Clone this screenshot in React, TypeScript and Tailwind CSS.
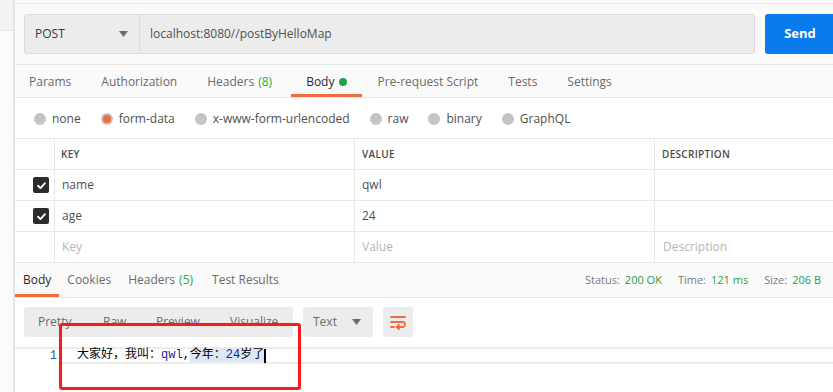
import React from 'react'

const ui = { fontFamily: '"Open Sans", "Noto Sans", sans-serif' }
const mono = { fontFamily: '"Liberation Mono", "Noto Sans CJK SC", monospace' }

const requestTabs = ['Params', 'Authorization', 'Headers', 'Body', 'Pre-request Script', 'Tests', 'Settings']
const bodyTypes = ['none', 'form-data', 'x-www-form-urlencoded', 'raw', 'binary', 'GraphQL']

const rows = [
  { key: 'name', value: 'qwl' },
  { key: 'age', value: '24' },
]

const Check = () => (
  <span className="flex h-[16px] w-[16px] items-center justify-center rounded-[2px] bg-[#2b2b2b]">
    <svg width="11" height="11" viewBox="0 0 12 12" fill="none">
      <path d="M2.2 6.3 L4.9 8.8 L9.8 3.4" stroke="white" strokeWidth="2" strokeLinecap="round" strokeLinejoin="round" />
    </svg>
  </span>
)

const Caret = () => (
  <svg width="9" height="6" viewBox="0 0 9 6">
    <path d="M0 0 H9 L4.5 6 Z" fill="#6b6b6b" />
  </svg>
)

export default function App() {
  return (
    <div className="relative flex h-[392px] w-[833px] overflow-hidden bg-[#fffffd] text-[12px] text-[#505050]" style={ui}>
      {/* sidebar edge */}
      <div className="flex w-[15px] shrink-0 flex-col border-r-2 border-[#e4e4e4]">
        <div className="h-[31px] border-b border-[#e6e6e6] bg-[#f3f3f3]" />
        <div className="flex-1 bg-[#fbfbfb]" />
      </div>

      <div className="flex min-w-0 flex-1 flex-col">
        {/* request bar */}
        <div className="border-b border-[#e6e6e6] bg-[#fafafa] pt-[3px]">
          <div className="-mr-[2px] flex h-[61px] items-center border-t border-[#e8e8e8] pb-[1px] pl-[9px]">
            <div className="flex h-[40px] min-w-0 flex-1 rounded-[3px] border border-[#dadada] bg-[#ececec]">
              <div className="flex w-[115px] shrink-0 items-center justify-between border-r border-[#dadada] pl-[10px] pr-[11px] text-[12px] text-[#3a3a3a]">
                <span>POST</span>
                <Caret />
              </div>
              <div className="flex items-center pl-[10px] text-[12px] text-[#505050]">localhost:8080//postByHelloMap</div>
            </div>
            <button className="ml-[10px] flex h-[40px] w-[70px] shrink-0 items-center justify-center rounded-[3px] bg-[#097bed] text-[13px] font-bold text-white">
              Send
            </button>
          </div>
        </div>

        {/* request tabs */}
        <div className="flex h-[33px] items-stretch border-b border-[#e6e6e6] bg-[#fafafa] text-[12px]">
          {requestTabs.map((t) => (
            <div
              key={t}
              className={`flex items-center px-[15px] pt-[1px] ${t === 'Body' ? 'ml-[4px] border-b-[3px] border-[#f26b3a] pt-[4px] text-[#2a2a2a]' : 'text-[#6b6b6b]'} ${t === 'Params' ? 'pl-[14px]' : ''}`}
            >
              {t}
              {t === 'Headers' && <span className="ml-[4px] text-[#26b047]">(8)</span>}
              {t === 'Body' && <span className="ml-[5px] h-[8px] w-[8px] rounded-full bg-[#26a146]" />}
            </div>
          ))}
        </div>

        {/* body types */}
        <div className="flex h-[40px] items-center bg-white pl-[19px] pt-[1px] text-[12px]">
          {bodyTypes.map((b) => (
            <div key={b} className="mr-[20px] flex items-center gap-[6px] text-[#505050]">
              <span className="flex h-[12px] w-[12px] items-center justify-center rounded-full bg-[#c4c4c4]">
                {b === 'form-data' && <span className="h-[8px] w-[8px] rounded-full bg-[#f26b3a]" />}
              </span>
              <span>{b}</span>
            </div>
          ))}
        </div>

        {/* params table */}
        <div className="bg-white">
          <div className="grid h-[32px] grid-cols-[40px_300px_300px_1fr] border-y border-[#e8e8e8] text-[10px] font-semibold tracking-[0.3px] text-[#4a4a4a]">
            <div className="border-r border-[#e8e8e8]" />
            <div className="flex items-center border-r border-[#e8e8e8] pl-[6px]">KEY</div>
            <div className="flex items-center border-r border-[#e8e8e8] pl-[7px]">VALUE</div>
            <div className="flex items-center pl-[7px]">DESCRIPTION</div>
          </div>
          {rows.map((r) => (
            <div key={r.key} className="grid h-[31px] grid-cols-[40px_300px_300px_1fr] border-b border-[#e8e8e8] text-[12px]">
              <div className="flex items-center justify-end border-r border-[#e8e8e8] pr-[5px]">
                <Check />
              </div>
              <div className="flex items-center border-r border-[#e8e8e8] pl-[7px]">{r.key}</div>
              <div className="flex items-center border-r border-[#e8e8e8] pl-[7px]">{r.value}</div>
              <div />
            </div>
          ))}
          <div className="grid h-[31px] grid-cols-[40px_300px_300px_1fr] border-b border-[#e8e8e8] text-[12px] text-[#b5b5b5]">
            <div className="border-r border-[#e8e8e8]" />
            <div className="flex items-center border-r border-[#e8e8e8] pl-[7px]">Key</div>
            <div className="flex items-center border-r border-[#e8e8e8] pl-[7px]">Value</div>
            <div className="flex items-center pl-[8px]">Description</div>
          </div>
        </div>

        {/* response tabs */}
        <div className="flex h-[35px] items-stretch justify-between border-b border-[#e6e6e6] bg-[#fafafa] text-[12px]">
          <div className="flex">
            <div className="flex items-center border-b-[3px] border-[#f26b3a] px-[8px] pt-[3px] text-[#2a2a2a]">Body</div>
            <div className="flex items-center px-[8px] text-[#6b6b6b]">Cookies</div>
            <div className="flex items-center px-[9px] text-[#6b6b6b]">
              Headers<span className="ml-[4px] text-[#26b047]">(5)</span>
            </div>
            <div className="flex items-center px-[10px] text-[#6b6b6b]">Test Results</div>
          </div>
          <div className="flex items-center gap-[16px] pr-[12px] text-[11px]">
            <span className="flex gap-[5px] text-[#7a7a7a]">
              Status:<span className="text-[#26a146]">200 OK</span>
            </span>
            <span className="flex gap-[5px] text-[#7a7a7a]">
              Time:<span className="text-[#26a146]">121 ms</span>
            </span>
            <span className="flex gap-[5px] text-[#7a7a7a]">
              Size:<span className="text-[#26a146]">206 B</span>
            </span>
          </div>
        </div>

        {/* response toolbar */}
        <div className="flex items-center gap-[10px] bg-white pl-[9px] pt-[9px] pb-[10px] text-[12px] text-[#6b6b6b]">
          <div className="flex h-[30px] w-[269px] items-center rounded-[3px] bg-[#ececec] pl-[14px]">
            <span className="w-[65px]">Pretty</span>
            <span className="w-[53px]">Raw</span>
            <span className="w-[74px]">Preview</span>
            <span>Visualize</span>
          </div>
          <div className="flex h-[30px] w-[70px] items-center justify-between rounded-[3px] bg-[#ececec] pl-[10px] pr-[12px]">
            <span>Text</span>
            <Caret />
          </div>
          <div className="flex h-[30px] w-[30px] items-center justify-center rounded-[3px] bg-[#ececec]">
            <svg width="18" height="16" viewBox="0 0 18 16" fill="none" stroke="#f26b3a" strokeWidth="1.8" strokeLinecap="round" strokeLinejoin="round">
              <path d="M2 3 H16" />
              <path d="M2 8 H13.5 a2.5 2.5 0 0 1 0 5 H8" />
              <path d="M10 10.8 L7.6 13 L10 15.2" />
              <path d="M2 13 H5" />
            </svg>
          </div>
        </div>

        {/* editor */}
        <div className="flex flex-1 border-t-2 border-[#ececec] bg-[#fffffd]">
          <div className="w-[45px] shrink-0 pr-[3px] text-right text-[12px] leading-[14px] text-[#2a5db0]" style={mono}>
            1
          </div>
          <div className="flex-1">
            <div className="flex h-[15px] items-center border-b-2 border-[#ececec] pl-[17px] text-[12px] leading-[13px] text-black" style={mono}>
              <span>大家好，我叫：</span>
              <span className="text-[#1a1aa6]">qwl</span>
              <span>,</span>
              <span className="bg-[#dce8f5]">
                今年：<span className="text-[#1a1aa6]">24</span>岁了
              </span>
              <span className="h-[14px] w-[2px] bg-black" />
            </div>
          </div>
        </div>
      </div>

      {/* annotation box */}
      <div className="pointer-events-none absolute left-[59px] top-[323px] h-[67px] w-[242px] rounded-[3px] border-[3px] border-[#fa1c1c]" />
    </div>
  )
}
